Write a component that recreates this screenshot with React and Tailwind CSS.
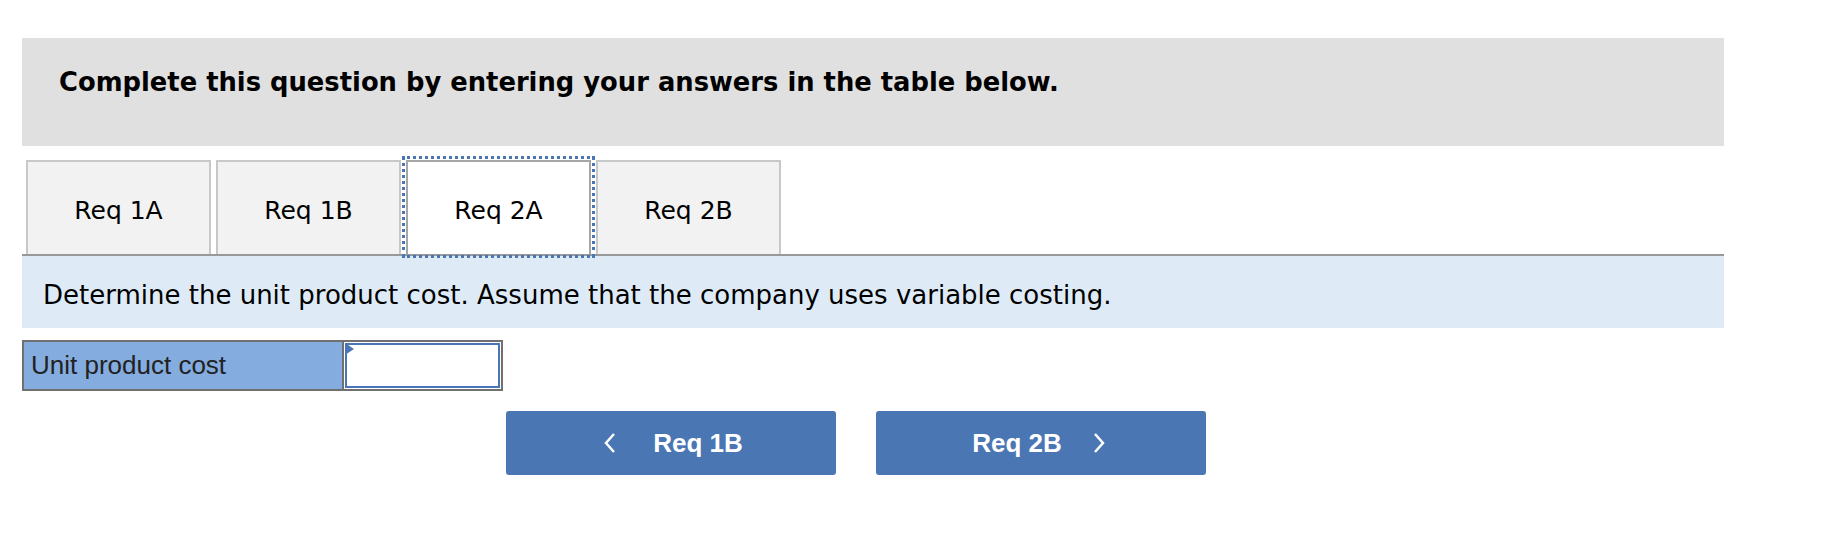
import React from "react";

const tabs = ["Req 1A", "Req 1B", "Req 2A", "Req 2B"];

export default function App() {
  return (
    <div className="w-[1838px] h-[548px] bg-white pl-[22px] pt-[38px]" style={{ fontFamily: "'DejaVu Sans', Verdana, sans-serif" }}>
      <div className="w-[1702px]">
        <div className="h-[108px] bg-[#e0e0e0] pl-[37px] pt-[29px]">
          <div className="text-[25.8px] leading-[30px] font-bold text-black">Complete this question by entering your answers in the table below.</div>
        </div>
        <div className="mt-[14px] flex gap-[5px] pl-[4px] border-b-2 border-[#999999]">
          {tabs.map((t, i) =>
            i === 2 ? (
              <div key={t} className="w-[185px] h-[94px] bg-white border-2 border-b-0 border-[#a6a6a6] outline-[3px] outline-dotted outline-[#4a76b6] outline-offset-[1px] flex items-center justify-center pt-[6px] text-[25px] text-black relative z-10 -mb-[2px]">
                {t}
              </div>
            ) : (
              <div key={t} className="w-[185px] h-[94px] bg-[#f2f2f2] border-2 border-b-0 border-[#c8c8c8] flex items-center justify-center pt-[6px] text-[25px] text-black">
                {t}
              </div>
            )
          )}
        </div>
        <div className="h-[72px] bg-[#deebf7] flex items-center pl-[21px] pt-[6px] text-[26px] text-black">
          Determine the unit product cost. Assume that the company uses variable costing.
        </div>
        <div className="mt-[12px] flex w-[481px] h-[51px] border-2 border-[#707070]" style={{ fontFamily: "'Liberation Sans', Arial, sans-serif" }}>
          <div className="w-[320px] bg-[#84acdf] border-r-2 border-[#707070] flex items-center pl-[7px] text-[26px] text-[#222222]">
            Unit product cost
          </div>
          <div className="flex-1 p-[1px] bg-white relative">
            <div className="w-full h-full border-2 border-[#4a76b6] bg-white"></div>
            <svg className="absolute left-[1px] top-[1px]" width="9" height="12" viewBox="0 0 9 12">
              <polygon points="0,0 9,6 0,12" fill="#4a76b6" />
            </svg>
          </div>
        </div>
        <div className="mt-[20px] flex gap-[40px] pl-[484px]" style={{ fontFamily: "'Liberation Sans', Arial, sans-serif" }}>
          <button className="w-[330px] h-[64px] bg-[#4a76b4] rounded-[3px] flex items-center justify-center text-white font-bold text-[26px]">
            <svg width="14" height="22" viewBox="0 0 14 22" className="mr-[36px] ml-[4px]">
              <polyline points="11,2 3,11 11,20" fill="none" stroke="white" strokeWidth="2.5" />
            </svg>
            Req 1B
          </button>
          <button className="w-[330px] h-[64px] bg-[#4a76b4] rounded-[3px] flex items-center justify-center text-white font-bold text-[26px]">
            <span className="-ml-[4px]">Req 2B</span>
            <svg width="14" height="22" viewBox="0 0 14 22" className="ml-[30px]">
              <polyline points="3,2 11,11 3,20" fill="none" stroke="white" strokeWidth="2.5" />
            </svg>
          </button>
        </div>
      </div>
    </div>
  );
}
